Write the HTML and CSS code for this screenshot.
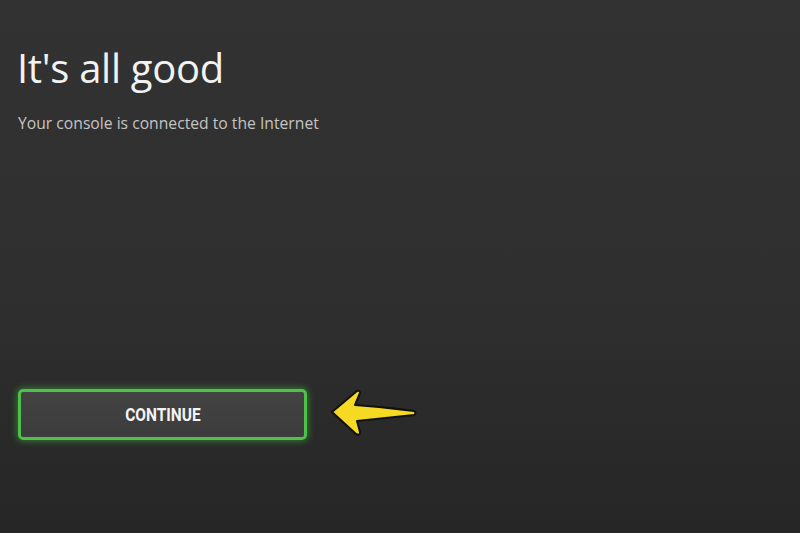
FILE: index.html
```html
<!DOCTYPE html>
<html>
<head>
<meta charset="utf-8">
<link rel="stylesheet" href="styles.css">
</head>
<body>
<main class="screen">
  <h1 class="title">It's all good</h1>
  <p class="subtitle">Your console is connected to the Internet</p>
  <div class="actions">
    <button class="continue"><span class="label">CONTINUE</span></button>
    <svg class="pointer" width="100" height="60" viewBox="325 380 100 60">
      <path d="M332 408 L357 387 Q360 386 360 389 L355 401 Q385 403 414 407 Q417 409 414 411 Q386 414 357 417 L360 428 Q360 432 356 430 Z" fill="#f5d922" stroke="#111" stroke-width="2" stroke-linejoin="round"/>
    </svg>
  </div>
</main>
</body>
</html>
```

FILE: styles.css
```css
html, body {
  margin: 0;
  padding: 0;
}
body {
  width: 800px;
  height: 533px;
  overflow: hidden;
  background: linear-gradient(to bottom, #323232 0%, #2f2f2f 55%, #262626 100%);
  font-family: "Open Sans", "Noto Sans", sans-serif;
}
.screen {
  display: flex;
  flex-direction: column;
  padding: 0 0 0 18px;
  height: 533px;
  box-sizing: border-box;
}
.title {
  margin: 40px 0 0 -1px;
  font-size: 40px;
  font-weight: 400;
  line-height: 56px;
  color: #f2f2f2;
  letter-spacing: -0.3px;
}
.subtitle {
  margin: 17px 0 0 0;
  font-size: 15.7px;
  line-height: 20px;
  color: #c4c4c4;
}
.actions {
  display: flex;
  align-items: center;
  gap: 18px;
  margin-top: 251px;
}
.continue {
  width: 289px;
  height: 51px;
  box-sizing: border-box;
  border: 3px solid #4cc24a;
  border-radius: 5px;
  background: linear-gradient(to bottom, #434343, #3c3c3c);
  box-shadow: 0 0 7px 1px rgba(70, 190, 60, 0.55);
  display: flex;
  align-items: center;
  justify-content: center;
  padding: 0;
}
.label {
  display: inline-block;
  font-family: Roboto, "Liberation Sans", sans-serif;
  font-weight: 700;
  font-size: 18px;
  color: #f4f4f4;
  transform: scaleX(0.86);
}
.pointer {
  display: block;
}
```
